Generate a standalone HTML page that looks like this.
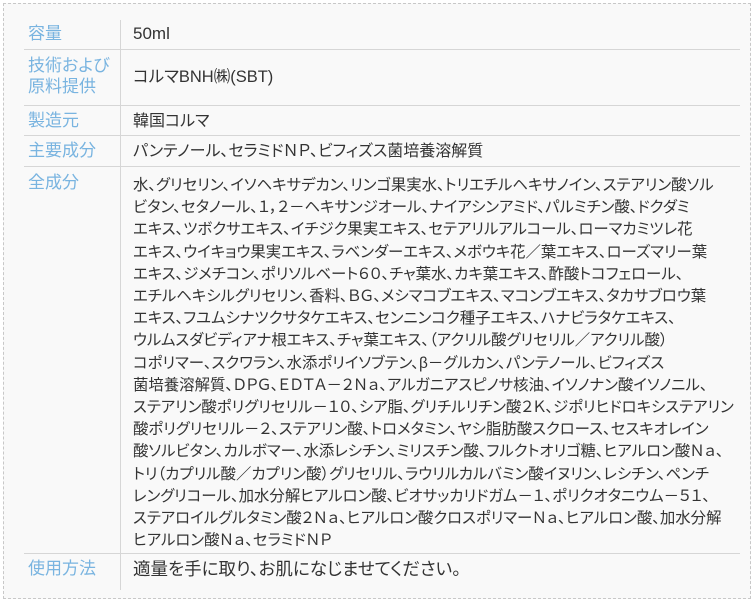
<!DOCTYPE html>
<html><head><meta charset="utf-8"><style>
html,body{margin:0;padding:0;background:#fff;}
body{width:756px;height:603px;position:relative;overflow:hidden;font-family:"Liberation Sans","Noto Sans CJK JP",sans-serif;font-feature-settings:"palt";}
.box{position:absolute;left:3px;top:3px;width:746px;height:594px;border:1px dashed #c8c8c8;background:#f9f9f9;}
.row{position:absolute;left:24px;width:716px;border-bottom:1px solid #d6d6d6;}
.lab{position:absolute;left:4px;color:#79b4e0;font-size:17px;line-height:21px;}
.vl{position:absolute;left:96px;width:1px;background:#d6d6d6;top:0;bottom:0;}
.val{position:absolute;left:109px;color:#333;font-size:16px;line-height:20px;white-space:nowrap;}
.ing{position:absolute;left:109px;top:8px;color:#333;font-size:15.4px;line-height:22.2px;white-space:nowrap;}
</style></head><body>
<div class="box"></div>
<div class="row" style="top:20px;height:29px"><div class="vl"></div><div class="lab" style="top:3px">容量</div><div class="val" style="top:4px;font-size:17px">50ml</div></div>
<div class="row" style="top:50px;height:55px"><div class="vl"></div><div class="lab" style="top:5px">技術および<br>原料提供</div><div class="val" style="top:17px;font-size:16.5px">コルマBNH㈱(SBT)</div></div>
<div class="row" style="top:106px;height:29px"><div class="vl"></div><div class="lab" style="top:4px">製造元</div><div class="val" style="top:6px">韓国コルマ</div></div>
<div class="row" style="top:136px;height:30px"><div class="vl"></div><div class="lab" style="top:4px">主要成分</div><div class="val" style="top:6px">パンテノール、セラミドＮＰ、ビフィズス菌培養溶解質</div></div>
<div class="row" style="top:167px;height:386px"><div class="vl"></div><div class="lab" style="top:5px">全成分</div><div class="ing">水、グリセリン、イソヘキサデカン、リンゴ果実水、トリエチルヘキサノイン、ステアリン酸ソル<br>ビタン、セタノール、１，２－ヘキサンジオール、ナイアシンアミド、パルミチン酸、ドクダミ<br>エキス、ツボクサエキス、イチジク果実エキス、セテアリルアルコール、ローマカミツレ花<br>エキス、ウイキョウ果実エキス、ラベンダーエキス、メボウキ花／葉エキス、ローズマリー葉<br>エキス、ジメチコン、ポリソルベート６０、チャ葉水、カキ葉エキス、酢酸トコフェロール、<br>エチルヘキシルグリセリン、香料、ＢＧ、メシマコブエキス、マコンブエキス、タカサブロウ葉<br>エキス、フユムシナツクサタケエキス、センニンコク種子エキス、ハナビラタケエキス、<br>ウルムスダビディアナ根エキス、チャ葉エキス、（アクリル酸グリセリル／アクリル酸）<br>コポリマー、スクワラン、水添ポリイソブテン、β－グルカン、パンテノール、ビフィズス<br>菌培養溶解質、ＤＰＧ、ＥＤＴＡ－２Ｎａ、アルガニアスピノサ核油、イソノナン酸イソノニル、<br>ステアリン酸ポリグリセリル－１０、シア脂、グリチルリチン酸２Ｋ、ジポリヒドロキシステアリン<br>酸ポリグリセリル－２、ステアリン酸、トロメタミン、ヤシ脂肪酸スクロース、セスキオレイン<br>酸ソルビタン、カルボマー、水添レシチン、ミリスチン酸、フルクトオリゴ糖、ヒアルロン酸Ｎａ、<br>トリ（カプリル酸／カプリン酸）グリセリル、ラウリルカルバミン酸イヌリン、レシチン、ペンチ<br>レングリコール、加水分解ヒアルロン酸、ビオサッカリドガム－１、ポリクオタニウム－５１、<br>ステアロイルグルタミン酸２Ｎａ、ヒアルロン酸クロスポリマーＮａ、ヒアルロン酸、加水分解<br>ヒアルロン酸Ｎａ、セラミドＮＰ</div></div>
<div class="row" style="top:554px;height:36px;border-bottom:none"><div class="vl"></div><div class="lab" style="top:4px">使用方法</div><div class="val" style="top:5px;font-size:17.5px">適量を手に取り、お肌になじませてください。</div></div>
</body></html>
